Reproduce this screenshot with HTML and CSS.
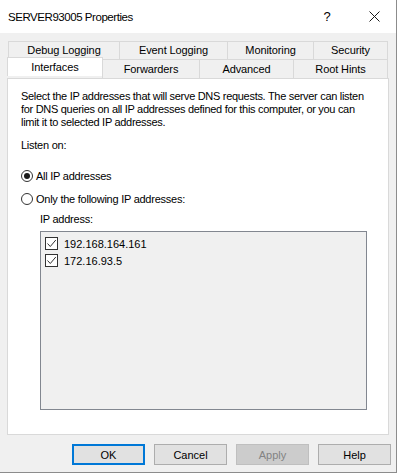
FILE: index.html
```html
<!DOCTYPE html>
<html>
<head>
<meta charset="utf-8">
<link rel="stylesheet" href="styles.css">
</head>
<body>
<div class="window">
  <div class="titlebar">
    <span class="title">SERVER93005 Properties</span>
    <span class="help-q">?</span>
    <span class="close"><svg width="11" height="11" viewBox="0 0 11 11"><path d="M0.5 0.5 L10.5 10.5 M10.5 0.5 L0.5 10.5" stroke="#1a1a1a" stroke-width="1" fill="none"/></svg></span>
  </div>
  <div class="body">
    <div class="tabs">
      <div class="tab-row top">
        <div class="tab w111">Debug Logging</div>
        <div class="tab w108">Event Logging</div>
        <div class="tab w86">Monitoring</div>
        <div class="tab w74">Security</div>
      </div>
      <div class="tab-row bottom">
        <div class="tab selected w95">Interfaces</div>
        <div class="tab w97">Forwarders</div>
        <div class="tab w94">Advanced</div>
        <div class="tab w94">Root Hints</div>
      </div>
    </div>
    <div class="panel">
      <p class="desc">Select the IP addresses that will serve DNS requests. The server can listen<br>for DNS queries on all IP addresses defined for this computer, or you can<br>limit it to selected IP addresses.</p>
      <p class="listen">Listen on:</p>
      <div class="radio-row first"><span class="radio checked"><span class="dot"></span></span><span>All IP addresses</span></div>
      <div class="radio-row"><span class="radio"></span><span>Only the following IP addresses:</span></div>
      <div class="ipgroup">
        <p class="iplabel">IP address:</p>
        <div class="iplist">
          <div class="ipitem"><span class="check"><svg width="11" height="11" viewBox="0 0 11 11"><path d="M1.5 5.5 L4.3 8.5 L9.8 2" stroke="#333" stroke-width="1" fill="none"/></svg></span><span>192.168.164.161</span></div>
          <div class="ipitem"><span class="check"><svg width="11" height="11" viewBox="0 0 11 11"><path d="M1.5 5.5 L4.3 8.5 L9.8 2" stroke="#333" stroke-width="1" fill="none"/></svg></span><span>172.16.93.5</span></div>
        </div>
      </div>
    </div>
    <div class="buttons">
      <button class="btn default">OK</button>
      <button class="btn">Cancel</button>
      <button class="btn disabled">Apply</button>
      <button class="btn">Help</button>
    </div>
  </div>
</div>
</body>
</html>
```
FILE: styles.css
```css
html, body {
  margin: 0;
  padding: 0;
  background: #ffffff;
}
body {
  font-family: "Liberation Sans", Arial, sans-serif;
  font-size: 11px;
  letter-spacing: -0.25px;
  color: #000;
}
.window {
  width: 397px;
  height: 473px;
  box-sizing: border-box;
  border-right: 1px solid #8c8c8c;
  border-bottom: 1px solid #8c8c8c;
  display: flex;
  flex-direction: column;
}
.titlebar {
  height: 33px;
  flex: none;
  background: #fff;
  display: flex;
  align-items: center;
  font-size: 11.5px;
}
.title {
  margin-left: 8px;
  flex: 1;
  letter-spacing: -0.45px;
}
.help-q {
  width: 14px;
  text-align: center;
  font-size: 13px;
  margin-right: 35px;
}
.close {
  display: flex;
  margin-right: 16px;
}
.body {
  flex: 1;
  background: #f0f0f0;
  display: flex;
  flex-direction: column;
  padding-top: 8px;
}
.tabs {
  display: flex;
  flex-direction: column;
}
.tab-row {
  display: flex;
  height: 18px;
}
.tab-row.top {
  margin-left: 8px;
}
.tab-row.bottom {
  margin-left: 7px;
  position: relative;
  z-index: 2;
}
.tab {
  box-sizing: border-box;
  border: 1px solid #d9d9d9;
  border-bottom: none;
  background: #f0f0f0;
  text-align: center;
  line-height: 17px;
  height: 19px;
  margin-right: -1px;
  letter-spacing: -0.1px;
}
.tab-row.bottom .tab {
  height: 19px;
  line-height: 19px;
}
.tab.selected {
  background: #fff;
  height: 22px;
  margin-top: -2px;
  line-height: 18px;
  position: relative;
  z-index: 3;
}
.w111 { width: 112px; }
.w108 { width: 109px; }
.w86 { width: 87px; }
.w74 { width: 75px; }
.w95 { width: 96px; }
.w97 { width: 98px; }
.w94 { width: 95px; }
.panel {
  margin-left: 7px;
  width: 382px;
  height: 357px;
  box-sizing: border-box;
  border: 1px solid #d9d9d9;
  background: #fff;
  padding: 11px 21px 0 13px;
  margin-top: 1px;
  position: relative;
  z-index: 1;
}
.panel p {
  margin: 0;
  line-height: 13px;
}
.desc {
  white-space: nowrap;
  letter-spacing: -0.3px;
}
.listen {
  margin-top: 10px !important;
}
.radio-row {
  display: flex;
  align-items: center;
  height: 16px;
  margin-top: 7px;
  gap: 3px;
}
.radio-row.first {
  margin-top: 16px;
}
.radio {
  width: 12px;
  height: 12px;
  box-sizing: border-box;
  border: 1px solid #333;
  border-radius: 50%;
  display: flex;
  align-items: center;
  justify-content: center;
  background: #fff;
}
.dot {
  width: 6px;
  height: 6px;
  border-radius: 50%;
  background: #1a1a1a;
}
.ipgroup {
  margin-left: 19px;
  margin-top: 6px;
}
.iplabel {
  margin: 0;
}
.iplist {
  margin-top: 5px;
  height: 179px;
  box-sizing: border-box;
  border: 1px solid #828790;
  background: #f0f0f0;
  padding-top: 3px;
}
.ipitem {
  display: flex;
  align-items: center;
  height: 17px;
  padding-left: 4px;
  gap: 6px;
  font-size: 11px;
  letter-spacing: 0;
}
.check {
  width: 13px;
  height: 13px;
  box-sizing: border-box;
  border: 1px solid #333;
  background: #fff;
  display: flex;
  align-items: center;
  justify-content: center;
}
.buttons {
  display: flex;
  justify-content: flex-end;
  gap: 9px;
  margin-top: 9px;
  padding-right: 5px;
}
.btn {
  width: 73px;
  height: 21px;
  box-sizing: border-box;
  border: 1px solid #adadad;
  background: #e1e1e1;
  font-family: "Liberation Sans", Arial, sans-serif;
  font-size: 11px;
  color: #000;
  padding: 0;
}
.btn.default {
  border: 2px solid #0078d7;
}
.btn.disabled {
  background: #cccccc;
  border-color: #bfbfbf;
  color: #838383;
}
```
